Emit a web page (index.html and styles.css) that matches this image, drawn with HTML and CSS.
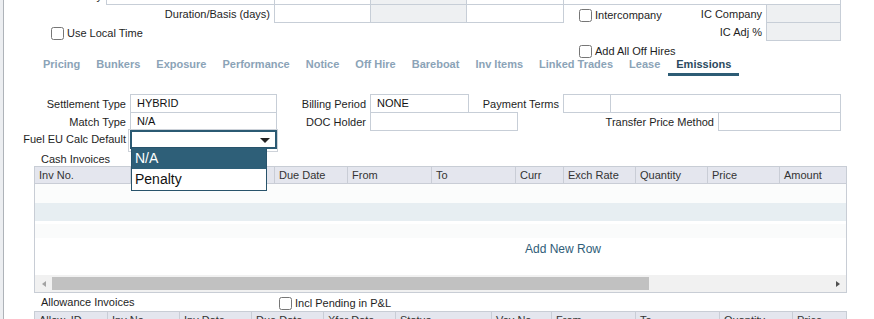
FILE: index.html
```html
<!DOCTYPE html>
<html lang="en">
<head>
  <meta charset="UTF-8">
  <title>Trade - Emissions</title>
  <link rel="stylesheet" href="styles.css">
</head>
<body>
<div class="page">
  <div class="edge"></div>
  <div class="main">

    <!-- header fields -->
    <div class="row row-a">
      <label class="lbl w102">Delivery</label>
      <span class="box first w169"></span>
      <span class="box w96"></span>
      <span class="box gray w96"></span>
      <span class="box w97"></span>
      <span class="box w277"></span>
    </div>
    <div class="row">
      <label class="lbl w270">Duration/Basis (days)</label>
      <span class="box first w97"></span>
      <span class="box gray w96"></span>
      <span class="box w97"></span>
      <label class="chk chk-ic"><input type="checkbox">Intercompany</label>
      <label class="lbl w104">IC Company</label>
      <span class="box first gray w75"></span>
    </div>
    <div class="row">
      <label class="chk chk-local"><input type="checkbox">Use Local Time</label>
      <label class="lbl w104">IC Adj %</label>
      <span class="box first gray w75"></span>
    </div>
    <div class="row-offhire">
      <label class="chk"><input type="checkbox">Add All Off Hires</label>
    </div>

    <!-- tabs -->
    <div class="tabs">
      <span class="tab">Pricing</span>
      <span class="tab">Bunkers</span>
      <span class="tab">Exposure</span>
      <span class="tab">Performance</span>
      <span class="tab">Notice</span>
      <span class="tab">Off Hire</span>
      <span class="tab">Bareboat</span>
      <span class="tab">Inv Items</span>
      <span class="tab">Linked Trades</span>
      <span class="tab">Lease</span>
      <span class="tab active">Emissions</span>
    </div>

    <!-- emissions form -->
    <div class="row row-first">
      <label class="lbl w126">Settlement Type</label>
      <span class="box first w147">HYBRID</span>
      <label class="lbl w93">Billing Period</label>
      <span class="box first w99">NONE</span>
      <label class="lbl w94">Payment Terms</label>
      <span class="box first w48"></span>
      <span class="box w230"></span>
    </div>
    <div class="row">
      <label class="lbl w126">Match Type</label>
      <span class="box first w147">N/A</span>
      <label class="lbl w93">DOC Holder</label>
      <span class="box first w148"></span>
      <label class="lbl w200">Transfer Price Method</label>
      <span class="box first w123"></span>
    </div>
    <div class="row row-sel">
      <label class="lbl w126">Fuel EU Calc Default</label>
      <div class="selwrap">
        <div class="sel"><span class="caret"></span></div>
        <div class="dropdown">
          <div class="opt on">N/A</div>
          <div class="opt">Penalty</div>
        </div>
      </div>
    </div>

    <!-- cash invoices -->
    <div class="section-title">Cash Invoices</div>
    <div class="grid">
      <div class="ghead">
        <span class="w96">Inv No.</span>
        <span class="w72"></span>
        <span class="w72"></span>
        <span class="w73">Due Date</span>
        <span class="w84">From</span>
        <span class="w84">To</span>
        <span class="w48">Curr</span>
        <span class="w72">Exch Rate</span>
        <span class="w72">Quantity</span>
        <span class="w72">Price</span>
        <span class="w66">Amount</span>
      </div>
      <div class="gbody">
        <div class="grow"></div>
        <div class="grow alt"></div>
        <div class="grow faint"></div>
        <div class="addrow">Add New Row</div>
      </div>
      <div class="hscroll">
        <span class="sbtn"><span class="arrow-l"></span></span>
        <span class="thumb"></span>
        <span class="strack"></span>
        <span class="sbtn"><span class="arrow-r"></span></span>
      </div>
    </div>

    <!-- allowance invoices -->
    <div class="allow">
      <span class="allow-title">Allowance Invoices</span>
      <label class="chk chk-pending"><input type="checkbox">Incl Pending in P&amp;L</label>
    </div>
    <div class="grid">
      <div class="ghead">
        <span class="w73">Allow. ID</span>
        <span class="w72">Inv No.</span>
        <span class="w72">Inv Date</span>
        <span class="w72">Due Date</span>
        <span class="w72">Xfer Date</span>
        <span class="w96">Status</span>
        <span class="w60">Voy No.</span>
        <span class="w84">From</span>
        <span class="w84">To</span>
        <span class="w73">Quantity</span>
        <span class="w53">Price</span>
      </div>
      <div class="grow"></div>
    </div>

  </div>
</div>
</body>
</html>
```

FILE: styles.css
```css
* {
  box-sizing: border-box;
}

html, body {
  margin: 0;
  height: 319px;
  overflow: hidden;
}

body {
  font-family: "Liberation Sans", Arial, sans-serif;
  font-size: 11px;
  color: #1e1e1e;
  background: #fff;
}

.page {
  display: flex;
  height: 319px;
}

.edge {
  flex: none;
  width: 4px;
  background: #eceef1;
  border-right: 1px solid #aeb3b9;
}

.main {
  flex: 1;
}

/* field rows */
.row {
  display: flex;
  height: 19px;
  margin-top: -1px;
}

.row-a {
  margin-top: -14px;
}

.row-first {
  margin-top: 18px;
}

.row-sel {
  height: 23px;
  margin-top: -2px;
}

.lbl {
  flex: none;
  text-align: right;
  padding: 2px 4px 0 0;
  line-height: 17px;
  white-space: nowrap;
}

.box {
  flex: none;
  height: 19px;
  border: 1px solid #c7ced7;
  border-left: 0;
  background: #fff;
  padding: 0 6px;
  line-height: 17px;
  color: #111;
}

.box.first {
  border-left: 1px solid #c7ced7;
}

.box.gray {
  background: #eef0f2;
}

.w48 { width: 48px; }
.w53 { width: 53px; }
.w60 { width: 60px; }
.w66 { width: 66px; }
.w72 { width: 72px; }
.w73 { width: 73px; }
.w75 { width: 75px; }
.w84 { width: 84px; }
.w93 { width: 93px; }
.w94 { width: 94px; }
.w96 { width: 96px; }
.w97 { width: 97px; }
.w99 { width: 99px; }
.w102 { width: 102px; }
.w104 { width: 104px; }
.w123 { width: 123px; }
.w126 { width: 126px; }
.w147 { width: 147px; }
.w148 { width: 148px; }
.w169 { width: 169px; }
.w200 { width: 200px; }
.w230 { width: 230px; }
.w270 { width: 270px; }
.w277 { width: 277px; }

/* checkboxes */
.chk {
  flex: none;
  display: flex;
  align-items: flex-start;
  gap: 3px;
  line-height: 13px;
  white-space: nowrap;
}

.chk input {
  flex: none;
  width: 13px;
  height: 13px;
  margin: 0;
}

.chk-ic {
  width: 83px;
  margin-left: 15px;
  padding-top: 5px;
}

.chk-local {
  width: 611px;
  margin-left: 47px;
  padding-top: 5px;
}

.row-offhire {
  margin-top: 4px;
  height: 13px;
  padding-left: 575px;
}

/* tabs */
.tabs {
  display: flex;
  padding-left: 31px;
}

.tab {
  padding: 0 8px 2px;
  line-height: 13px;
  font-weight: bold;
  color: #8ba3b7;
  border-bottom: 3px solid transparent;
  white-space: nowrap;
}

.tab.active {
  color: #2b4a5e;
  border-bottom-color: #2d5c75;
}

/* select + open list */
.selwrap {
  position: relative;
  flex: none;
  width: 150px;
  height: 23px;
  margin-left: -2px;
  border: 1px solid #cdd2d9;
  padding-left: 1px;
}

.sel {
  width: 147px;
  height: 19px;
  border: 2px solid #2b5a73;
  display: flex;
  align-items: center;
  justify-content: flex-end;
  padding-right: 5px;
}

.caret {
  margin-top: 2px;
  border-left: 5px solid transparent;
  border-right: 5px solid transparent;
  border-top: 5px solid #222;
}

.dropdown {
  position: absolute;
  left: 2px;
  top: 17px;
  width: 136px;
  border: 1px solid #28536b;
  background: #fff;
  font-size: 14px;
  z-index: 5;
}

.opt {
  height: 21px;
  line-height: 21px;
  padding-left: 3px;
  color: #111;
}

.opt.on {
  background: #2e5f78;
  color: #fff;
}

/* grids */
.section-title {
  height: 14px;
  line-height: 14px;
  padding-left: 37px;
}

.grid {
  margin-left: 30px;
  width: 813px;
  border: 1px solid #c8cdd5;
}

.ghead {
  display: flex;
  height: 17px;
  background: #e4e6ee;
  border-bottom: 1px solid #c9cdd6;
}

.ghead span {
  flex: none;
  border-right: 1px solid #c9cdd6;
  padding-left: 4px;
  line-height: 16px;
  white-space: nowrap;
  overflow: hidden;
  color: #333;
}

.ghead span:last-child {
  border-right: 0;
}

.gbody {
  height: 91px;
}

.grow {
  height: 19px;
  background: #fbfcfc;
}

.grow.alt {
  height: 18px;
  background: #e7eef2;
}

.grow.faint {
  height: 14px;
  margin-top: 3px;
  background: #fafbfb;
}

.addrow {
  margin-top: 4px;
  padding-left: 490px;
  line-height: 14px;
  font-size: 12px;
  color: #2f5d78;
}

.hscroll {
  display: flex;
  height: 17px;
  background: #f1f1f1;
}

.sbtn {
  flex: none;
  width: 17px;
  display: flex;
  align-items: center;
  justify-content: center;
}

.arrow-l {
  border-top: 3px solid transparent;
  border-bottom: 3px solid transparent;
  border-right: 4px solid #a3a3a3;
}

.arrow-r {
  border-top: 3px solid transparent;
  border-bottom: 3px solid transparent;
  border-left: 4px solid #505050;
}

.thumb {
  flex: none;
  width: 597px;
  height: 13px;
  margin-top: 2px;
  background: #c1c1c1;
}

.strack {
  flex: 1;
}

.allow {
  display: flex;
  height: 15px;
  margin-top: 3px;
  padding-left: 37px;
}

.allow-title {
  flex: none;
  width: 238px;
  line-height: 13px;
}

.chk-pending {
  margin-top: 1px;
}
```
